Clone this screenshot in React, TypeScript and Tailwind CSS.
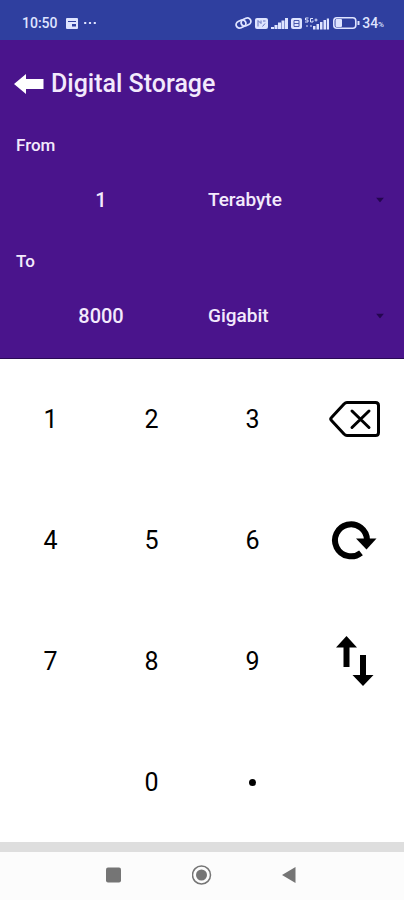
import { useState } from "react";

const units = [
  { label: "Bit", bits: 1 },
  { label: "Byte", bits: 8 },
  { label: "Megabit", bits: 1e6 },
  { label: "Megabyte", bits: 8e6 },
  { label: "Gigabit", bits: 1e9 },
  { label: "Gigabyte", bits: 8e9 },
  { label: "Terabit", bits: 1e12 },
  { label: "Terabyte", bits: 8e12 },
];

const bitsOf = (label: string) =>
  units.find((u) => u.label === label)?.bits ?? 1;

function StatusBar() {
  return (
    <div className="flex h-10 shrink-0 items-center bg-[#2f3f9f] pt-1.5 pr-5 pl-[22px] text-[#dfe4ff]">
      <span className="text-sm font-medium">10:50</span>
      <svg viewBox="0 0 12 11" className="ml-2 h-[11px] w-3" fill="none">
        <rect width="12" height="11" rx="1" fill="currentColor" />
        <path d="M2 3.5h8" stroke="#2f3f9f" />
        <path d="M6 6h4v2.5H6z" fill="#2f3f9f" />
      </svg>
      <svg viewBox="0 0 12 2" className="ml-1.5 h-0.5 w-3" fill="currentColor">
        <circle cx="1.2" cy="1" r="1.2" />
        <circle cx="6" cy="1" r="1.2" />
        <circle cx="10.8" cy="1" r="1.2" />
      </svg>

      <div className="ml-auto flex items-center">
        <svg
          viewBox="0 0 17 14"
          className="h-3.5 w-[17px]"
          fill="none"
          stroke="currentColor"
          strokeWidth="1.8"
        >
          <rect x="1" y="4.5" width="10" height="7" rx="3.5" transform="rotate(-25 6 8)" />
          <rect x="6" y="2.5" width="10" height="7" rx="3.5" transform="rotate(-25 11 6)" />
        </svg>
        <svg viewBox="0 0 13 11" className="ml-[3px] h-[11px] w-[13px]">
          <rect width="13" height="11" rx="2" fill="currentColor" />
          <path
            d="M3 8.5v-6l3 3v-3M7.5 8.5l2.5-3M8 3h2.5"
            fill="none"
            stroke="#6673bd"
          />
        </svg>
        <SignalBars />
        <svg viewBox="0 0 11 11" className="ml-[3px] h-[11px] w-[11px]">
          <rect width="11" height="11" rx="2" fill="currentColor" />
          <path
            d="M3 2.5h5v6H3zM3 5.5h5"
            fill="none"
            stroke="#4a58ad"
          />
        </svg>
        <svg viewBox="0 0 25 13" className="ml-0.5 h-[13px] w-[25px]">
          <path
            d="M4.5 1h-3v2h2.5v2H1M9 1.5H6.5V5H9V3.5M10.5 3h3M12 1.5v3M2 9h2M6 9h2"
            fill="none"
            stroke="currentColor"
          />
          <path
            d="M9 9h2.5v3.5H9zM12.5 7H15v5.500h-2.500zM16 5h2.500v7.500H16zM19.500 3H22v9.500h-2.500zM22.800 1.500H25v11h-2.200z"
            fill="currentColor"
          />
        </svg>
        <svg viewBox="0 0 27 12" className="ml-1 h-3 w-[27px]" fill="none">
          <rect
            x=".8"
            y=".8"
            width="22"
            height="10.4"
            rx="3"
            stroke="currentColor"
            strokeWidth="1.6"
          />
          <rect x="2.5" y="2" width="6.500" height="8" rx="1" fill="currentColor" />
          <path d="M25.5 4v4" stroke="currentColor" strokeWidth="2" />
        </svg>
        <span className="ml-0.5 text-sm font-medium">34</span>
        <span className="mt-1 text-[8px] font-medium">%</span>
      </div>
    </div>
  );
}

function SignalBars() {
  return (
    <svg viewBox="0 0 17 11" className="ml-[3px] h-[11px] w-[17px]" fill="currentColor">
      <path d="M0 9h3v2H0zM3.5 7h3v4h-3zM7 4.500h3V11H7zM10.500 2.500h3V11h-3zM14 0h3v11h-3z" />
    </svg>
  );
}

type RowProps = {
  id: string;
  label: string;
  value: string;
  unit: string;
  onUnit: (unit: string) => void;
};

function UnitRow({ id, label, value, unit, onUnit }: RowProps) {
  return (
    <div className="mb-2">
      <label htmlFor={id} className="flex h-12 items-center px-4 text-[17px] font-medium">
        {label}
      </label>
      <div className="grid h-[60px] grid-cols-2 items-center font-medium">
        <input
          id={id}
          readOnly
          value={value}
          className="w-full bg-transparent text-center text-xl outline-none"
        />
        <div className="relative">
          <select
            aria-label={`${label} unit`}
            value={unit}
            onChange={(e) => onUnit(e.target.value)}
            className="w-full appearance-none bg-transparent pr-9 pl-1.5 text-[19px] outline-none"
          >
            {units.map((u) => (
              <option key={u.label} className="text-black">
                {u.label}
              </option>
            ))}
          </select>
          <svg
            viewBox="0 0 10 5"
            className="pointer-events-none absolute top-1/2 right-[19px] h-[5px] w-2.5 -translate-y-1/2"
            fill="#240650"
          >
            <path d="M1 0h8L5 5z" />
          </svg>
        </div>
      </div>
    </div>
  );
}

const keyClass =
  "flex items-center justify-center pt-0.5 text-[25px] leading-8 text-black active:bg-gray-100";

export default function App() {
  const [value, setValue] = useState("1");
  const [from, setFrom] = useState("Terabyte");
  const [to, setTo] = useState("Gigabit");

  const result = String((Number(value) * bitsOf(from)) / bitsOf(to));

  const press = (key: string) => {
    if (key === "." && value.includes(".")) return;
    setValue(value === "0" && key !== "." ? key : value + key);
  };

  const swap = () => {
    setFrom(to);
    setTo(from);
  };

  const digit = (key: string) => (
    <button key={key} className={keyClass} onClick={() => press(key)}>
      {key}
    </button>
  );

  return (
    <div className="flex min-h-screen flex-col bg-white font-['Roboto',sans-serif]">
      <StatusBar />

      <header className="border-b border-[#2a0a55] bg-[#4a148c] pt-[5px] pb-1 text-[#f3eafc]">
        <div className="flex h-[77px] items-center gap-[7px] px-3.5">
          <button aria-label="Back">
            <svg viewBox="0 0 30 20" className="h-5 w-[30px]" fill="#fff">
              <path d="M0 10 12 0v5h17.5v10H12v5z" />
            </svg>
          </button>
          <h1 className="text-[25px] leading-8 font-medium">Digital Storage</h1>
        </div>
        <UnitRow id="from" label="From" value={value} unit={from} onUnit={setFrom} />
        <UnitRow id="to" label="To" value={result} unit={to} onUnit={setTo} />
      </header>

      <main className="grid flex-1 grid-cols-4 grid-rows-4">
        {["1", "2", "3"].map(digit)}
        <button
          aria-label="Delete"
          className={keyClass}
          onClick={() => setValue(value.slice(0, -1) || "0")}
        >
          <svg
            viewBox="0 0 52 38"
            className="h-[38px] w-[52px]"
            fill="none"
            stroke="currentColor"
            strokeWidth="3"
            strokeLinecap="round"
            strokeLinejoin="round"
          >
            <path d="M19 1.5h28.500q3 0 3 3v27q0 3-3 3H19q-1.500 0-3-1.500L3.500 19.500q-1.500-1.500 0-3L16 3Q17.500 1.500 19 1.500z" />
            <path d="m24 10 17 16.500M41 10 24 26.500" />
          </svg>
        </button>

        {["4", "5", "6"].map(digit)}
        <button aria-label="Reset" className={keyClass} onClick={() => setValue("0")}>
          <svg viewBox="0 0 48 40" className="h-10 w-12">
            <path
              d="M37 19A16 16 0 1 0 31 31.800"
              fill="none"
              stroke="currentColor"
              strokeWidth="6"
            />
            <path d="M26 17.500h20.500L36.500 28.500z" fill="currentColor" />
          </svg>
        </button>

        {["7", "8", "9"].map(digit)}
        <button aria-label="Swap units" className={keyClass} onClick={swap}>
          <svg viewBox="0 0 40 52" className="h-[52px] w-10" fill="currentColor">
            <path d="M12.5 0 23 11.500h-7.500V31h-6V11.500H2z" />
            <path d="M29 50 18.500 39H26V19h6v20h7.500z" />
          </svg>
        </button>

        <span />
        {digit("0")}
        <button aria-label="." className={keyClass} onClick={() => press(".")}>
          <span className="size-[7px] rounded-full bg-black" />
        </button>
      </main>

      <div className="h-2.5 shrink-0 bg-[#dedede]" />
      <nav className="flex h-12 shrink-0 items-center justify-center gap-[68px] bg-[#fcfcfc] pb-0.5 text-[#757575]">
        <button aria-label="Recent apps">
          <svg viewBox="0 0 20 20" className="size-5" fill="currentColor">
            <rect x="2" y="2.5" width="15" height="15" rx="2" />
          </svg>
        </button>
        <button aria-label="Home">
          <svg viewBox="0 0 20 20" className="size-5" fill="none" stroke="currentColor">
            <circle cx="9.5" cy="10" r="9" strokeWidth="1.5" />
            <circle cx="9.5" cy="10" r="5.5" fill="currentColor" stroke="none" />
          </svg>
        </button>
        <button aria-label="Go back">
          <svg viewBox="0 0 20 20" className="size-5" fill="currentColor">
            <path d="M2 10 15.500 2v16z" />
          </svg>
        </button>
      </nav>
    </div>
  );
}
